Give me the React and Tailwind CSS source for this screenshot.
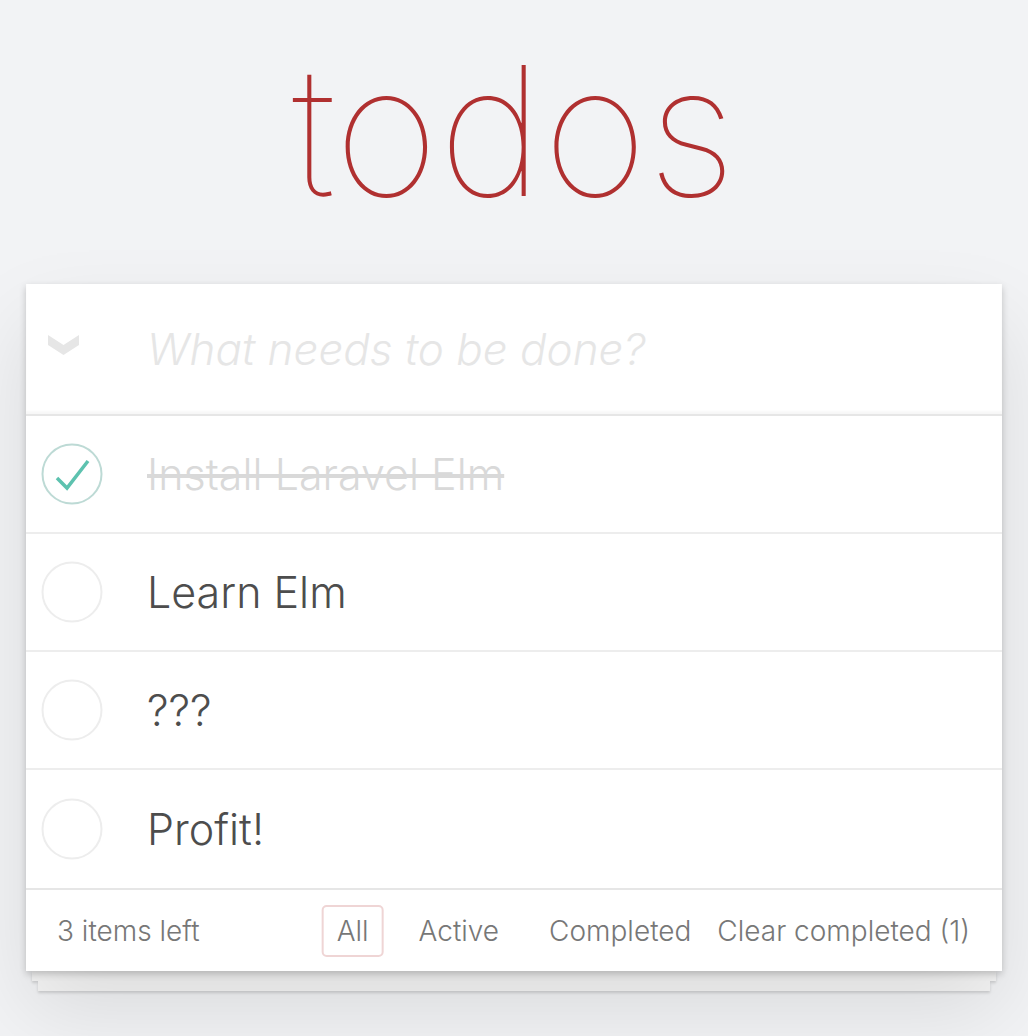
import React, { useState } from 'react';

const initialTodos = [
  { id: 1, title: 'Install Laravel Elm', completed: true },
  { id: 2, title: 'Learn Elm', completed: false },
  { id: 3, title: '???', completed: false },
  { id: 4, title: 'Profit!', completed: false },
];

function CheckCircle({ checked }) {
  return (
    <svg width="62" height="62" viewBox="0 0 62 62" className="shrink-0">
      <circle
        cx="31"
        cy="31"
        r="29.5"
        fill="none"
        stroke={checked ? '#bddad5' : '#ededed'}
        strokeWidth="2"
      />
      {checked && (
        <path
          d="M16 35 L26 45 L47 18"
          fill="none"
          stroke="#5dc2af"
          strokeWidth="3.5"
        />
      )}
    </svg>
  );
}

export default function App() {
  const [todos, setTodos] = useState(initialTodos);
  const [filter, setFilter] = useState('all');

  const left = todos.filter((t) => !t.completed).length;
  const done = todos.length - left;

  const toggle = (id) =>
    setTodos(todos.map((t) => (t.id === id ? { ...t, completed: !t.completed } : t)));

  const filters = [
    { key: 'all', label: 'All' },
    { key: 'active', label: 'Active' },
    { key: 'completed', label: 'Completed' },
  ];

  return (
    <div className="min-h-screen bg-[#f2f3f5] font-['Inter','Liberation_Sans',sans-serif] font-light text-[#4d4d4d]">
      <h1 className="pt-[21px] pb-[43px] text-center text-[180px] leading-[220px] font-thin text-[#b03030]">
        todos
      </h1>

      <div className="mx-[26px]">
        <div className="relative bg-white shadow-[0_3px_7px_rgba(0,0,0,0.2),0_40px_80px_rgba(0,0,0,0.1)]">
          {/* new todo row */}
          <div className="flex h-[130px] items-center shadow-[inset_0_-3px_2px_rgba(0,0,0,0.03)]">
            <div className="flex w-[121px] items-center pl-[22px]">
              <svg width="31" height="20" viewBox="0 0 31 20" className="-mt-[8px]">
                <path d="M0 0 L15.5 10 L31 0 L31 10 L15.5 20 L0 10 Z" fill="#e6e6e6" />
              </svg>
            </div>
            <input
              placeholder="What needs to be done?"
              className="flex-1 bg-transparent text-[44px] italic font-light outline-none placeholder:text-[#e6e6e6]"
            />
          </div>

          {/* list */}
          <ul className="border-t-2 border-[#e6e6e6]">
            {todos.map((t) => (
              <li
                key={t.id}
                className="flex h-[118px] items-center border-b-2 border-[#ededed] last:border-b-0"
              >
                <button
                  onClick={() => toggle(t.id)}
                  className="ml-[15px] flex w-[106px] items-center"
                >
                  <CheckCircle checked={t.completed} />
                </button>
                <span
                  className={
                    t.completed
                      ? 'text-[43px] text-[#d9d9d9] line-through'
                      : 'text-[43px] text-[#4d4d4d]'
                  }
                >
                  {t.title}
                </span>
              </li>
            ))}
          </ul>

          {/* footer */}
          <div className="relative flex h-[83px] items-center justify-between border-t-2 border-[#e6e6e6] pl-[31px] pr-[32px] text-[28px] text-[#777]">
            <span>{left} items left</span>
            <ul className="absolute left-1/2 flex -translate-x-1/2 gap-[20px]">
              {filters.map((f) => (
                <li key={f.key}>
                  <button
                    onClick={() => setFilter(f.key)}
                    className={
                      filter === f.key
                        ? 'rounded-[5px] border-2 border-[rgba(175,47,47,0.2)] px-[13px] py-[3px]'
                        : 'rounded-[5px] border-2 border-transparent px-[13px] py-[3px]'
                    }
                  >
                    {f.label}
                  </button>
                </li>
              ))}
            </ul>
            <button>Clear completed ({done})</button>
          </div>
        </div>
        <div className="mx-[6px] h-[10px] bg-[#f6f6f6] shadow-[0_2px_3px_rgba(0,0,0,0.15)]" />
        <div className="mx-[12px] h-[10px] bg-[#f6f6f6] shadow-[0_2px_3px_rgba(0,0,0,0.15)]" />
      </div>
    </div>
  );
}
